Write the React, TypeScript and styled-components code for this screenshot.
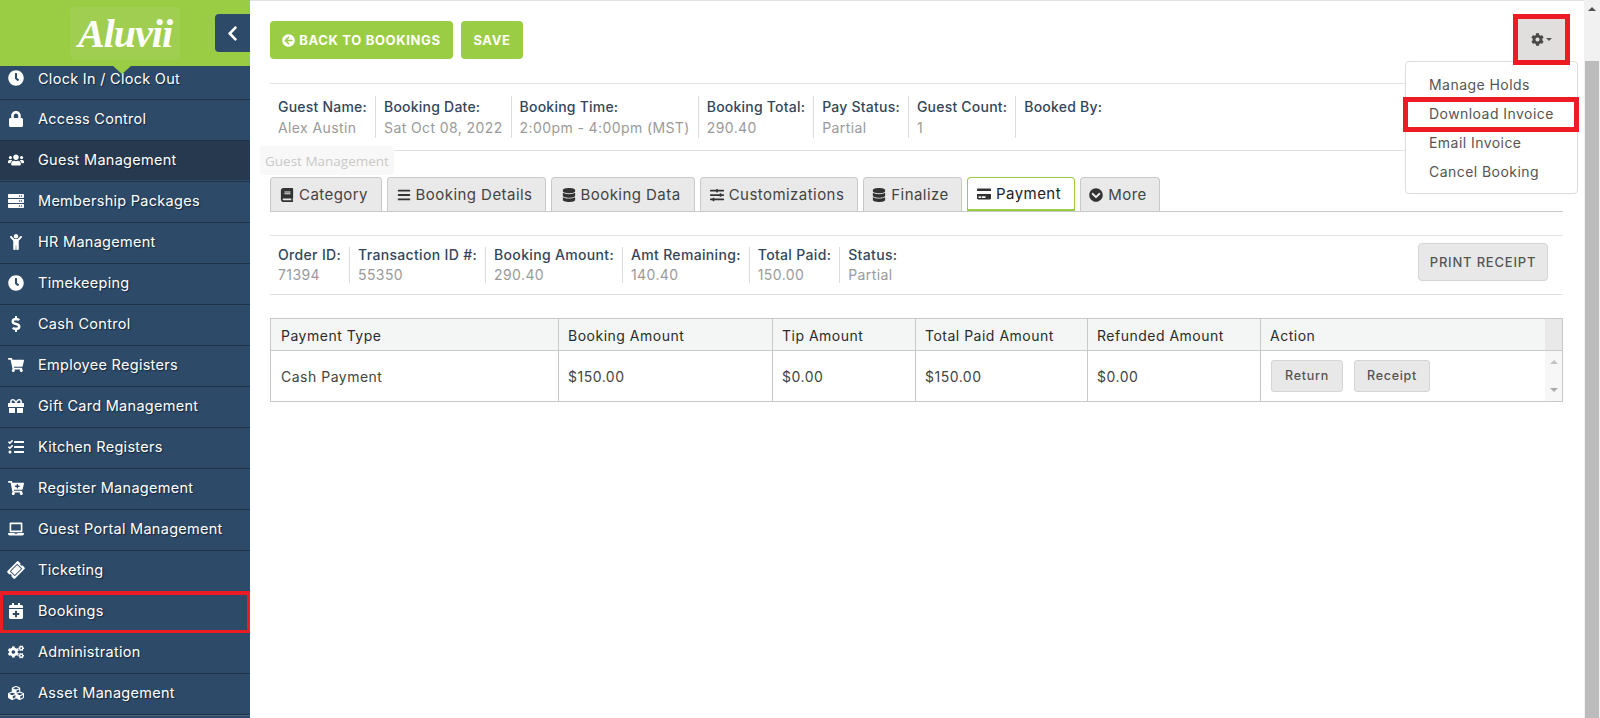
import React from "react";
import styled, { createGlobalStyle } from "styled-components";
import {
  FaClock,
  FaLock,
  FaUsers,
  FaServer,
  FaChild,
  FaDollarSign,
  FaShoppingCart,
  FaGift,
  FaTasks,
  FaCartPlus,
  FaLaptop,
  FaTicketAlt,
  FaCalendarPlus,
  FaCogs,
  FaCubes,
  FaChevronLeft,
  FaArrowCircleLeft,
  FaCog,
  FaBook,
  FaBars,
  FaDatabase,
  FaSlidersH,
  FaCreditCard,
  FaChevronCircleDown,
} from "react-icons/fa";

const GlobalStyle = createGlobalStyle`
  html, body {
    margin: 0;
    height: 718px;
    overflow: hidden;
    background: #fff;
    font-family: Inter, "Liberation Sans", sans-serif;
  }
  * { box-sizing: border-box; }
`;

const Page = styled.div`
  position: relative;
  display: flex;
  width: 1600px;
  height: 718px;
  overflow: hidden;
`;

const Sidebar = styled.aside`
  width: 250px;
  flex: none;
  background: #2d4a68;
  overflow: hidden;
`;

const Brand = styled.div`
  position: relative;
  height: 66px;
  background: #9acd43;
  display: flex;
  align-items: center;
  padding-left: 70px;

  &::after {
    content: "";
    position: absolute;
    left: 113px;
    bottom: -8px;
    border-left: 9px solid transparent;
    border-right: 9px solid transparent;
    border-top: 8px solid #9acd43;
    z-index: 2;
  }
`;

const LogoBox = styled.div`
  width: 110px;
  height: 53px;
  border-radius: 5px;
  background: #a0ce51;
  display: flex;
  align-items: center;
  justify-content: center;
`;

const Logo = styled.span`
  color: #fff;
  font-family: "Liberation Serif", serif;
  font-style: italic;
  font-weight: 700;
  font-size: 40px;
  letter-spacing: -1px;
`;

const Collapse = styled.button`
  margin-left: auto;
  width: 35px;
  height: 38px;
  border: 0;
  padding: 0;
  border-radius: 4px 0 0 4px;
  background: #2d4a68;
  color: #fff;
  display: flex;
  align-items: center;
  justify-content: center;
  font-size: 17px;
`;

const NavItem = styled.div<{ $active?: boolean; $first?: boolean; $marked?: boolean }>`
  position: relative;
  height: ${(p) => (p.$first ? "34px" : "41px")};
  display: flex;
  align-items: center;
  padding-left: 8px;
  padding-bottom: ${(p) => (p.$first ? "9px" : "3px")};
  background: ${(p) => (p.$active ? "#26394f" : "#2d4a68")};
  border-bottom: 1px solid #1f3347;
  box-shadow: inset 0 -1px 0 #2d4a68, 0 1px 0 #4d657d;
  color: #fff;
  font-size: 14.5px;
  letter-spacing: 0.28px;
  text-shadow: 1px 1px 1px #16273a;

  ${(p) =>
    p.$marked &&
    `
    &::after {
      content: "";
      position: absolute;
      left: 0;
      right: -1px;
      top: -1px;
      bottom: -2px;
      border: 4px solid #ed1c24;
      border-left-width: 3px;
    }
  `}
`;

const NavIcon = styled.span`
  width: 30px;
  flex: none;
  display: flex;
  font-size: 16px;
`;

const TicketIcon = styled(FaTicketAlt)`
  transform: rotate(-45deg);
`;

const Main = styled.main`
  flex: 1;
  min-width: 0;
  padding: 21px 21px 0 20px;
  border-top: 1px solid #e2e2e2;
  margin-right: 16px;
`;

const Toolbar = styled.div`
  display: flex;
  gap: 8px;
  height: 62px;
  padding-bottom: 24px;
  margin-top: -1px;
`;

const GreenButton = styled.button<{ $w: number }>`
  width: ${(p) => p.$w}px;
  height: 38px;
  padding: 0;
  border: 0;
  border-radius: 4px;
  background: #9acd43;
  color: #fff;
  font: 700 13px Inter, "Liberation Sans", sans-serif;
  letter-spacing: 0.65px;
  display: flex;
  align-items: center;
  justify-content: center;
  gap: 4px;
`;

const GearButton = styled.button`
  position: absolute;
  left: 1513px;
  top: 14px;
  width: 57px;
  height: 51px;
  border: 5px solid #ed1c24;
  background: #e1dfdd;
  color: #4a4a4a;
  display: flex;
  align-items: center;
  justify-content: center;
  gap: 2px;
  padding: 0;
  font-size: 13px;
  z-index: 4;
`;

const Caret = styled.span`
  border-left: 3px solid transparent;
  border-right: 3px solid transparent;
  border-top: 3px solid #555;
`;

const Menu = styled.div`
  position: absolute;
  left: 1405px;
  top: 61px;
  width: 173px;
  height: 133px;
  padding: 8px 0;
  background: #fff;
  border: 1px solid #ddd;
  border-radius: 4px;
  z-index: 3;
`;

const MenuItem = styled.div<{ $marked?: boolean }>`
  position: relative;
  height: 29px;
  display: flex;
  align-items: center;
  padding-left: 23px;
  color: #555;
  font-size: 14px;
  letter-spacing: 0.45px;

  ${(p) =>
    p.$marked &&
    `
    &::after {
      content: "";
      position: absolute;
      left: -3px;
      right: -2px;
      top: -2px;
      bottom: -4px;
      border: 5px solid #ed1c24;
    }
  `}
`;

const Tooltip = styled.div`
  position: absolute;
  left: 260px;
  top: 146px;
  width: 134px;
  height: 29px;
  display: flex;
  align-items: center;
  padding-left: 5px;
  background: #f8f8f8;
  border-radius: 4px;
  color: #c9c9c9;
  font: 13.5px "Open Sans", sans-serif;
`;

const InfoRow = styled.div<{ $compact?: boolean }>`
  position: relative;
  display: flex;
  align-items: stretch;
  border-top: 1px solid #e2e2e2;
  border-bottom: 1px solid #e2e2e2;
  padding: ${(p) => (p.$compact ? "11px 8px" : "12px 8px")};
`;

const InfoCell = styled.div<{ $compact?: boolean }>`
  display: flex;
  flex-direction: column;
  gap: ${(p) => (p.$compact ? "4px" : "0")};
  padding: 0 8px;
  border-left: 1px solid #dcdcdc;
  line-height: ${(p) => (p.$compact ? "16px" : "21px")};
  letter-spacing: ${(p) => (p.$compact ? "0.33px" : "0.22px")};
  font-size: 14px;
  white-space: nowrap;

  &:first-child {
    padding-left: 0;
    border-left: 0;
  }
`;

const InfoLabel = styled.div`
  color: #33475b;
  font-weight: 500;
`;

const InfoValue = styled.div`
  color: #9a9a9a;
  letter-spacing: 0.4px;
  min-height: 16px;
`;

const Tabs = styled.div`
  display: flex;
  gap: 5px;
  height: 35px;
  margin-top: 26px;
  border-bottom: 1px solid #c9c9c9;
`;

const Tab = styled.div<{ $active?: boolean; $w: number }>`
  width: ${(p) => p.$w}px;
  height: 34px;
  display: flex;
  align-items: center;
  justify-content: center;
  gap: 5px;
  padding-right: 4px;
  border: 1px solid ${(p) => (p.$active ? "#9acd43" : "#c9c9c9")};
  border-bottom: ${(p) => (p.$active ? "2px solid #9acd43" : "0")};
  border-radius: 4px 4px 0 0;
  background: ${(p) => (p.$active ? "#fff" : "#eae9e9")};
  color: ${(p) => (p.$active ? "#222" : "#444")};
  font-size: 15px;
  letter-spacing: 0.45px;

  svg {
    font-size: 14px;
    color: #333;
  }
`;

const ReceiptButton = styled.button`
  position: absolute;
  right: 15px;
  top: 7px;
  width: 130px;
  height: 38px;
  border: 1px solid #d5d5d5;
  border-radius: 4px;
  background: #e9e8e8;
  color: #555;
  font: 500 13px Inter, "Liberation Sans", sans-serif;
  letter-spacing: 0.8px;
`;

const PaymentInfo = styled.div`
  margin-top: 23px;
`;

const Table = styled.div`
  margin-top: 23px;
  border: 1px solid #c9c9c9;
  display: grid;
  grid-template-columns: 287px 214px 143px 172px 173px 1fr;
`;

const Head = styled.div<{ $last?: boolean }>`
  position: relative;
  height: 32px;
  display: flex;
  align-items: center;
  padding: 1px 0 0 9px;
  background: #f4f6f6;
  border-left: 1px solid #c9c9c9;
  border-bottom: 1px solid #c9c9c9;
  color: #2c2c2c;
  font-size: 14px;
  letter-spacing: 0.5px;

  &:first-child {
    padding-left: 10px;
    border-left: 0;
  }

  ${(p) =>
    p.$last &&
    `
    &::after {
      content: "";
      position: absolute;
      right: 0;
      top: 0;
      bottom: 0;
      width: 17px;
      background: #eae9e9;
    }
  `}
`;

const Cell = styled.div<{ $first?: boolean }>`
  position: relative;
  height: 50px;
  display: flex;
  align-items: center;
  padding-left: ${(p) => (p.$first ? "10px" : "9px")};
  border-left: ${(p) => (p.$first ? "0" : "1px solid #c9c9c9")};
  color: #444;
  font-size: 14px;
  letter-spacing: 0.5px;
`;

const ActionCell = styled(Cell)`
  gap: 11px;
  padding-left: 10px;
  padding-bottom: 1px;
`;

const SmallButton = styled.button<{ $w: number }>`
  width: ${(p) => p.$w}px;
  height: 32px;
  border: 1px solid #d5d5d5;
  border-radius: 3px;
  background: #e9e8e8;
  color: #555;
  font: 500 12.5px Inter, "Liberation Sans", sans-serif;
  letter-spacing: 0.7px;
`;

const InnerScroll = styled.div`
  position: absolute;
  right: 0;
  top: 0;
  bottom: 0;
  width: 17px;
  background: #f7f7f7;
  display: flex;
  flex-direction: column;
  justify-content: space-between;
  align-items: center;
  padding: 9px 0;
`;

const Arrow = styled.span<{ $down?: boolean; $color: string; $size: number }>`
  width: 0;
  height: 0;
  border-left: ${(p) => p.$size}px solid transparent;
  border-right: ${(p) => p.$size}px solid transparent;
  ${(p) => (p.$down ? "border-top" : "border-bottom")}: ${(p) => p.$size}px solid ${(p) => p.$color};
`;

const PageScroll = styled.div`
  position: absolute;
  right: 0;
  top: 0;
  bottom: 0;
  width: 16px;
  background: #f1f1f1;
  display: flex;
  flex-direction: column;
  align-items: center;
`;

const ScrollCap = styled.div`
  height: 17px;
  display: flex;
  align-items: center;
  justify-content: center;
`;

const ScrollThumb = styled.div`
  flex: 1;
  align-self: stretch;
  margin: 44px 1px 0;
  background: #bcbcbc;
`;

const nav = [
  { label: "Clock In / Clock Out", icon: <FaClock /> },
  { label: "Access Control", icon: <FaLock /> },
  { label: "Guest Management", icon: <FaUsers />, active: true },
  { label: "Membership Packages", icon: <FaServer /> },
  { label: "HR Management", icon: <FaChild /> },
  { label: "Timekeeping", icon: <FaClock /> },
  { label: "Cash Control", icon: <FaDollarSign /> },
  { label: "Employee Registers", icon: <FaShoppingCart /> },
  { label: "Gift Card Management", icon: <FaGift /> },
  { label: "Kitchen Registers", icon: <FaTasks /> },
  { label: "Register Management", icon: <FaCartPlus /> },
  { label: "Guest Portal Management", icon: <FaLaptop /> },
  { label: "Ticketing", icon: <TicketIcon /> },
  { label: "Bookings", icon: <FaCalendarPlus />, marked: true },
  { label: "Administration", icon: <FaCogs /> },
  { label: "Asset Management", icon: <FaCubes /> },
];

const bookingInfo = [
  ["Guest Name:", "Alex Austin"],
  ["Booking Date:", "Sat Oct 08, 2022"],
  ["Booking Time:", "2:00pm - 4:00pm (MST)"],
  ["Booking Total:", "290.40"],
  ["Pay Status:", "Partial"],
  ["Guest Count:", "1"],
  ["Booked By:", ""],
];

const paymentInfo = [
  ["Order ID:", "71394"],
  ["Transaction ID #:", "55350"],
  ["Booking Amount:", "290.40"],
  ["Amt Remaining:", "140.40"],
  ["Total Paid:", "150.00"],
  ["Status:", "Partial"],
];

const tabs = [
  { label: "Category", icon: <FaBook />, w: 112 },
  { label: "Booking Details", icon: <FaBars />, w: 159 },
  { label: "Booking Data", icon: <FaDatabase />, w: 144 },
  { label: "Customizations", icon: <FaSlidersH />, w: 158 },
  { label: "Finalize", icon: <FaDatabase />, w: 99 },
  { label: "Payment", icon: <FaCreditCard />, w: 108, active: true },
  { label: "More", icon: <FaChevronCircleDown />, w: 80 },
];

const heads = ["Payment Type", "Booking Amount", "Tip Amount", "Total Paid Amount", "Refunded Amount", "Action"];
const amounts = ["$150.00", "$0.00", "$150.00", "$0.00"];

export default function App() {
  return (
    <Page>
      <GlobalStyle />
      <Sidebar>
        <Brand>
          <LogoBox>
            <Logo>Aluvii</Logo>
          </LogoBox>
          <Collapse aria-label="Collapse">
            <FaChevronLeft />
          </Collapse>
        </Brand>
        {nav.map((n, i) => (
          <NavItem key={n.label} $first={i === 0} $active={n.active} $marked={n.marked}>
            <NavIcon>{n.icon}</NavIcon>
            {n.label}
          </NavItem>
        ))}
      </Sidebar>

      <Main>
        <Toolbar>
          <GreenButton $w={183}>
            <FaArrowCircleLeft />
            BACK TO BOOKINGS
          </GreenButton>
          <GreenButton $w={62}>SAVE</GreenButton>
        </Toolbar>

        <InfoRow>
          {bookingInfo.map(([label, value]) => (
            <InfoCell key={label}>
              <InfoLabel>{label}</InfoLabel>
              <InfoValue>{value}</InfoValue>
            </InfoCell>
          ))}
        </InfoRow>

        <Tabs>
          {tabs.map((t) => (
            <Tab key={t.label} $w={t.w} $active={t.active}>
              {t.icon}
              {t.label}
            </Tab>
          ))}
        </Tabs>

        <PaymentInfo>
          <InfoRow $compact>
            {paymentInfo.map(([label, value]) => (
              <InfoCell key={label} $compact>
                <InfoLabel>{label}</InfoLabel>
                <InfoValue>{value}</InfoValue>
              </InfoCell>
            ))}
            <ReceiptButton>PRINT RECEIPT</ReceiptButton>
          </InfoRow>
        </PaymentInfo>

        <Table>
          {heads.map((h, i) => (
            <Head key={h} $last={i === heads.length - 1}>
              {h}
            </Head>
          ))}
          <Cell $first>Cash Payment</Cell>
          {amounts.map((a, i) => (
            <Cell key={i}>{a}</Cell>
          ))}
          <ActionCell>
            <SmallButton $w={72}>Return</SmallButton>
            <SmallButton $w={76}>Receipt</SmallButton>
            <InnerScroll>
              <Arrow $color="#c4c4c4" $size={4} />
              <Arrow $down $color="#aaa" $size={4} />
            </InnerScroll>
          </ActionCell>
        </Table>
      </Main>

      <GearButton aria-label="Settings">
        <FaCog />
        <Caret />
      </GearButton>
      <Menu>
        <MenuItem>Manage Holds</MenuItem>
        <MenuItem $marked>Download Invoice</MenuItem>
        <MenuItem>Email Invoice</MenuItem>
        <MenuItem>Cancel Booking</MenuItem>
      </Menu>
      <Tooltip>Guest Management</Tooltip>
      <PageScroll>
        <ScrollCap>
          <Arrow $color="#505050" $size={4} />
        </ScrollCap>
        <ScrollThumb />
      </PageScroll>
    </Page>
  );
}
